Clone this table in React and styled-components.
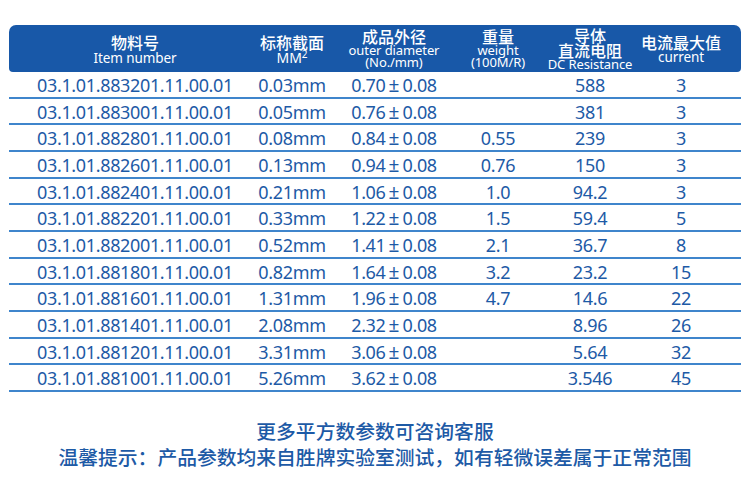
import React from "react";
import styled, { createGlobalStyle } from "styled-components";

const Global = createGlobalStyle`
  html, body { margin: 0; padding: 0; background: #fff; }
  body { width: 750px; height: 498px; overflow: hidden; font-family: "Noto Sans", "Noto Sans CJK SC", sans-serif; }
`;

const Page = styled.div`
  width: 750px;
  height: 498px;
  padding: 25px 9px 0 9px;
  box-sizing: border-box;
  color: #1d5aa6;
`;

const cols = "252px 62px 142px 66px 118px 64px 1fr";

const Header = styled.div`
  display: grid;
  grid-template-columns: ${cols};
  height: 47px;
  background: #1858a8;
  border-radius: 7px 7px 4px 4px;
  color: #fff;
`;

const HCell = styled.div`
  display: flex;
  flex-direction: column;
  align-items: center;
  justify-content: center;
  white-space: nowrap;
  padding-top: ${(p) => p.$pt || 0}px;
`;

const Cn = styled.div`
  font-family: "Noto Sans CJK SC", sans-serif;
  font-size: 16px;
  height: ${(p) => p.$lh || 16}px;
  line-height: ${(p) => p.$lh || 16}px;
  font-weight: 500;
`;

const En = styled.div`
  font-family: "Noto Sans", sans-serif;
  font-size: ${(p) => p.$fs || 13}px;
  height: ${(p) => p.$lh || 13}px;
  line-height: ${(p) => p.$lh || 13}px;
  letter-spacing: -0.1px;
`;

const Sup = styled.sup`
  font-size: 10px;
  vertical-align: 5px;
  line-height: 0;
`;

const Row = styled.div`
  display: grid;
  grid-template-columns: ${cols};
  height: 26.67px;
  border-bottom: 2px solid #3f85cc;
  box-sizing: border-box;
  align-items: center;
`;

const Cell = styled.div`
  text-align: center;
  white-space: nowrap;
  font-family: "Noto Sans", sans-serif;
  font-size: 18px;
  letter-spacing: -0.35px;
  line-height: 24px;
  padding-top: 1px;
  display: flex;
  justify-content: center;
`;

const PlusMinus = styled.span`
  display: inline-block;
  width: 17px;
  text-align: center;
  letter-spacing: 0;
  font-size: 19px;
`;

const Footer = styled.div`
  margin-top: 26px;
  display: flex;
  flex-direction: column;
  align-items: center;
  font-family: "Noto Sans CJK SC", sans-serif;
  font-size: 19.8px;
  line-height: 26px;
  font-weight: 500;
  color: #1d5aa6;
`;

const rows = [
  ["03.1.01.883201.11.00.01", "0.03mm", "0.70±0.08", "", "588", "3"],
  ["03.1.01.883001.11.00.01", "0.05mm", "0.76±0.08", "", "381", "3"],
  ["03.1.01.882801.11.00.01", "0.08mm", "0.84±0.08", "0.55", "239", "3"],
  ["03.1.01.882601.11.00.01", "0.13mm", "0.94±0.08", "0.76", "150", "3"],
  ["03.1.01.882401.11.00.01", "0.21mm", "1.06±0.08", "1.0", "94.2", "3"],
  ["03.1.01.882201.11.00.01", "0.33mm", "1.22±0.08", "1.5", "59.4", "5"],
  ["03.1.01.882001.11.00.01", "0.52mm", "1.41±0.08", "2.1", "36.7", "8"],
  ["03.1.01.881801.11.00.01", "0.82mm", "1.64±0.08", "3.2", "23.2", "15"],
  ["03.1.01.881601.11.00.01", "1.31mm", "1.96±0.08", "4.7", "14.6", "22"],
  ["03.1.01.881401.11.00.01", "2.08mm", "2.32±0.08", "", "8.96", "26"],
  ["03.1.01.881201.11.00.01", "3.31mm", "3.06±0.08", "", "5.64", "32"],
  ["03.1.01.881001.11.00.01", "5.26mm", "3.62±0.08", "", "3.546", "45"],
];

function renderValue(c) {
  if (c.includes("±")) {
    const [a, b] = c.split("±");
    return (
      <>
        {a}
        <PlusMinus>±</PlusMinus>
        {b}
      </>
    );
  }
  return c;
}

export default function App() {
  return (
    <Page>
      <Global />
      <Header>
        <HCell>
          <Cn $lh={18}>物料号</Cn>
          <En $fs={13.5} $lh={14}>Item number</En>
        </HCell>
        <HCell>
          <Cn $lh={18}>标称截面</Cn>
          <En $fs={14} $lh={14}>
            MM<Sup>2</Sup>
          </En>
        </HCell>
        <HCell $pt={1}>
          <Cn $lh={15}>成品外径</Cn>
          <En $lh={12}>outer diameter</En>
          <En $lh={13}>(No./mm)</En>
        </HCell>
        <HCell $pt={1}>
          <Cn $lh={15}>重量</Cn>
          <En $lh={12}>weight</En>
          <En $lh={13}>(100M/R)</En>
        </HCell>
        <HCell $pt={2}>
          <Cn $lh={14}>导体</Cn>
          <Cn $lh={16}>直流电阻</Cn>
          <En $lh={13}>DC Resistance</En>
        </HCell>
        <HCell>
          <Cn $lh={18}>电流最大值</Cn>
          <En $fs={13.5} $lh={13}>current</En>
        </HCell>
        <HCell />
      </Header>
      {rows.map((r, i) => (
        <Row key={i}>
          {r.map((c, j) => (
            <Cell key={j}>{renderValue(c)}</Cell>
          ))}
          <Cell />
        </Row>
      ))}
      <Footer>
        <div>更多平方数参数可咨询客服</div>
        <div>温馨提示：产品参数均来自胜牌实验室测试，如有轻微误差属于正常范围</div>
      </Footer>
    </Page>
  );
}
